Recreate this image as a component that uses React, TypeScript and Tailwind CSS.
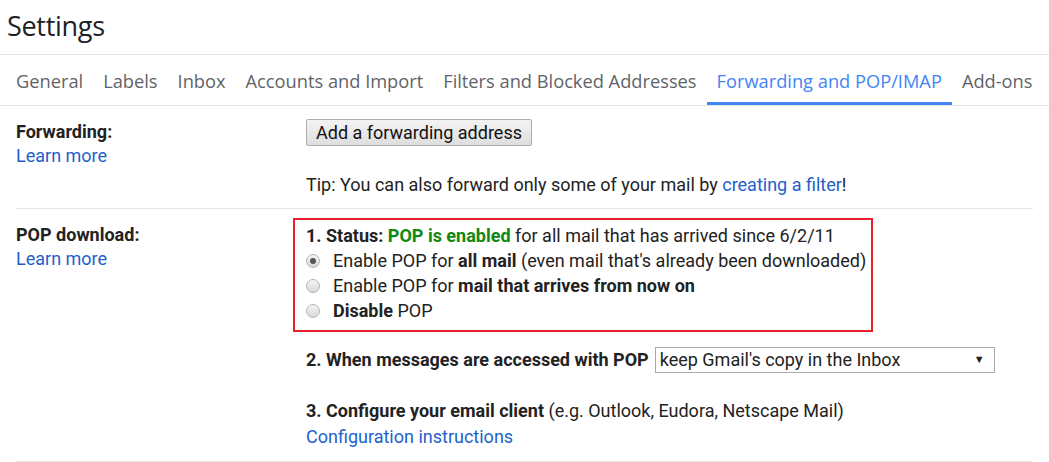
const tabs = [
  "General",
  "Labels",
  "Inbox",
  "Accounts and Import",
  "Filters and Blocked Addresses",
  "Forwarding and POP/IMAP",
  "Add-ons",
];

function Radio({ checked }: { checked?: boolean }) {
  return (
    <span className="relative inline-flex h-[14px] w-[14px] shrink-0 items-center justify-center rounded-full border border-[#b5b5b5] bg-gradient-to-b from-[#f4f4f4] to-[#d8d8d8]">
      {checked && <span className="h-[6px] w-[6px] rounded-full bg-[#555]" />}
    </span>
  );
}

export default function App() {
  return (
    <div className="h-[462px] w-[1049px] overflow-hidden bg-white font-['Roboto',sans-serif] text-[18px] text-[#222]">
      <header className="flex h-[55px] items-center border-b border-[#e6e6e6] pb-[2px] pl-[7px]">
        <h1 className="font-['Open_Sans',sans-serif] text-[27px] font-normal tracking-[-0.3px] text-[#202124]">
          Settings
        </h1>
      </header>

      <nav className="flex h-[51px] border-b border-[#e6e6e6] pl-[6px] font-['Open_Sans',sans-serif] text-[18.25px]">
        {tabs.map((t) => {
          const active = t === "Forwarding and POP/IMAP";
          return (
            <div
              key={t}
              className={
                active
                  ? "flex items-center border-b-[3px] border-[#4285f4] px-[10px] pt-[4px] text-[#4285f4]"
                  : "flex items-center border-b-[3px] border-transparent px-[10px] pt-[4px] text-[#5f6368]"
              }
            >
              {t}
            </div>
          );
        })}
      </nav>

      <div className="px-[16px]">
        <section className="flex border-b border-[#e6e6e6] pb-[11px] pt-[14px] leading-[24px]">
          <div className="w-[290px] shrink-0">
            <div className="font-bold">Forwarding:</div>
            <a className="text-[#1f5fcc]">Learn more</a>
          </div>
          <div className="-mt-[1px]">
            <button className="h-[27px] rounded-[2px] border border-[#adadad] bg-gradient-to-b from-[#f3f3f3] to-[#dedede] px-[9px] leading-[24px] text-[#111]">
              Add a forwarding address
            </button>
            <div className="mt-[27px]">
              Tip: You can also forward only some of your mail by{" "}
              <a className="text-[#1f5fcc]">creating a filter</a>!
            </div>
          </div>
        </section>

        <section className="flex border-b border-[#e6e6e6] pb-[12px] pt-[9px] leading-[24px]">
          <div className="w-[277px] shrink-0 pt-[5px]">
            <div className="font-bold">POP download:</div>
            <a className="text-[#1f5fcc]">Learn more</a>
          </div>
          <div>
            <div className="w-[580px] whitespace-nowrap border-2 border-[#e8202c] px-[11px] pb-[7px] pt-[3px] leading-[25px]">
              <div>
                <b>1. Status: </b>
                <b className="text-[#118811]">POP is enabled</b> for all mail that has arrived since 6/2/11
              </div>
              <label className="flex items-center gap-[13px]">
                <Radio checked />
                <span>
                  Enable POP for <b>all mail</b> (even mail that's already been downloaded)
                </span>
              </label>
              <label className="flex items-center gap-[13px]">
                <Radio />
                <span>
                  Enable POP for <b>mail that arrives from now on</b>
                </span>
              </label>
              <label className="flex items-center gap-[13px]">
                <Radio />
                <span>
                  <b>Disable</b> POP
                </span>
              </label>
            </div>

            <div className="mt-[15px] flex items-center whitespace-nowrap pl-[13px]">
              <b>2. When messages are accessed with POP</b>
              <div className="ml-[6px] flex h-[26px] w-[340px] items-center justify-between border border-[#a9a9a9] pl-[4px] pr-[9px]">
                <span>keep Gmail's copy in the Inbox</span>
                <span className="text-[11px] text-[#222]">▼</span>
              </div>
            </div>

            <div className="mt-[26px] whitespace-nowrap pl-[13px]">
              <b>3. Configure your email client</b> (e.g. Outlook, Eudora, Netscape Mail)
            </div>
            <div className="mt-[2px] pl-[13px]">
              <a className="text-[#1f5fcc]">Configuration instructions</a>
            </div>
          </div>
        </section>
      </div>
    </div>
  );
}
